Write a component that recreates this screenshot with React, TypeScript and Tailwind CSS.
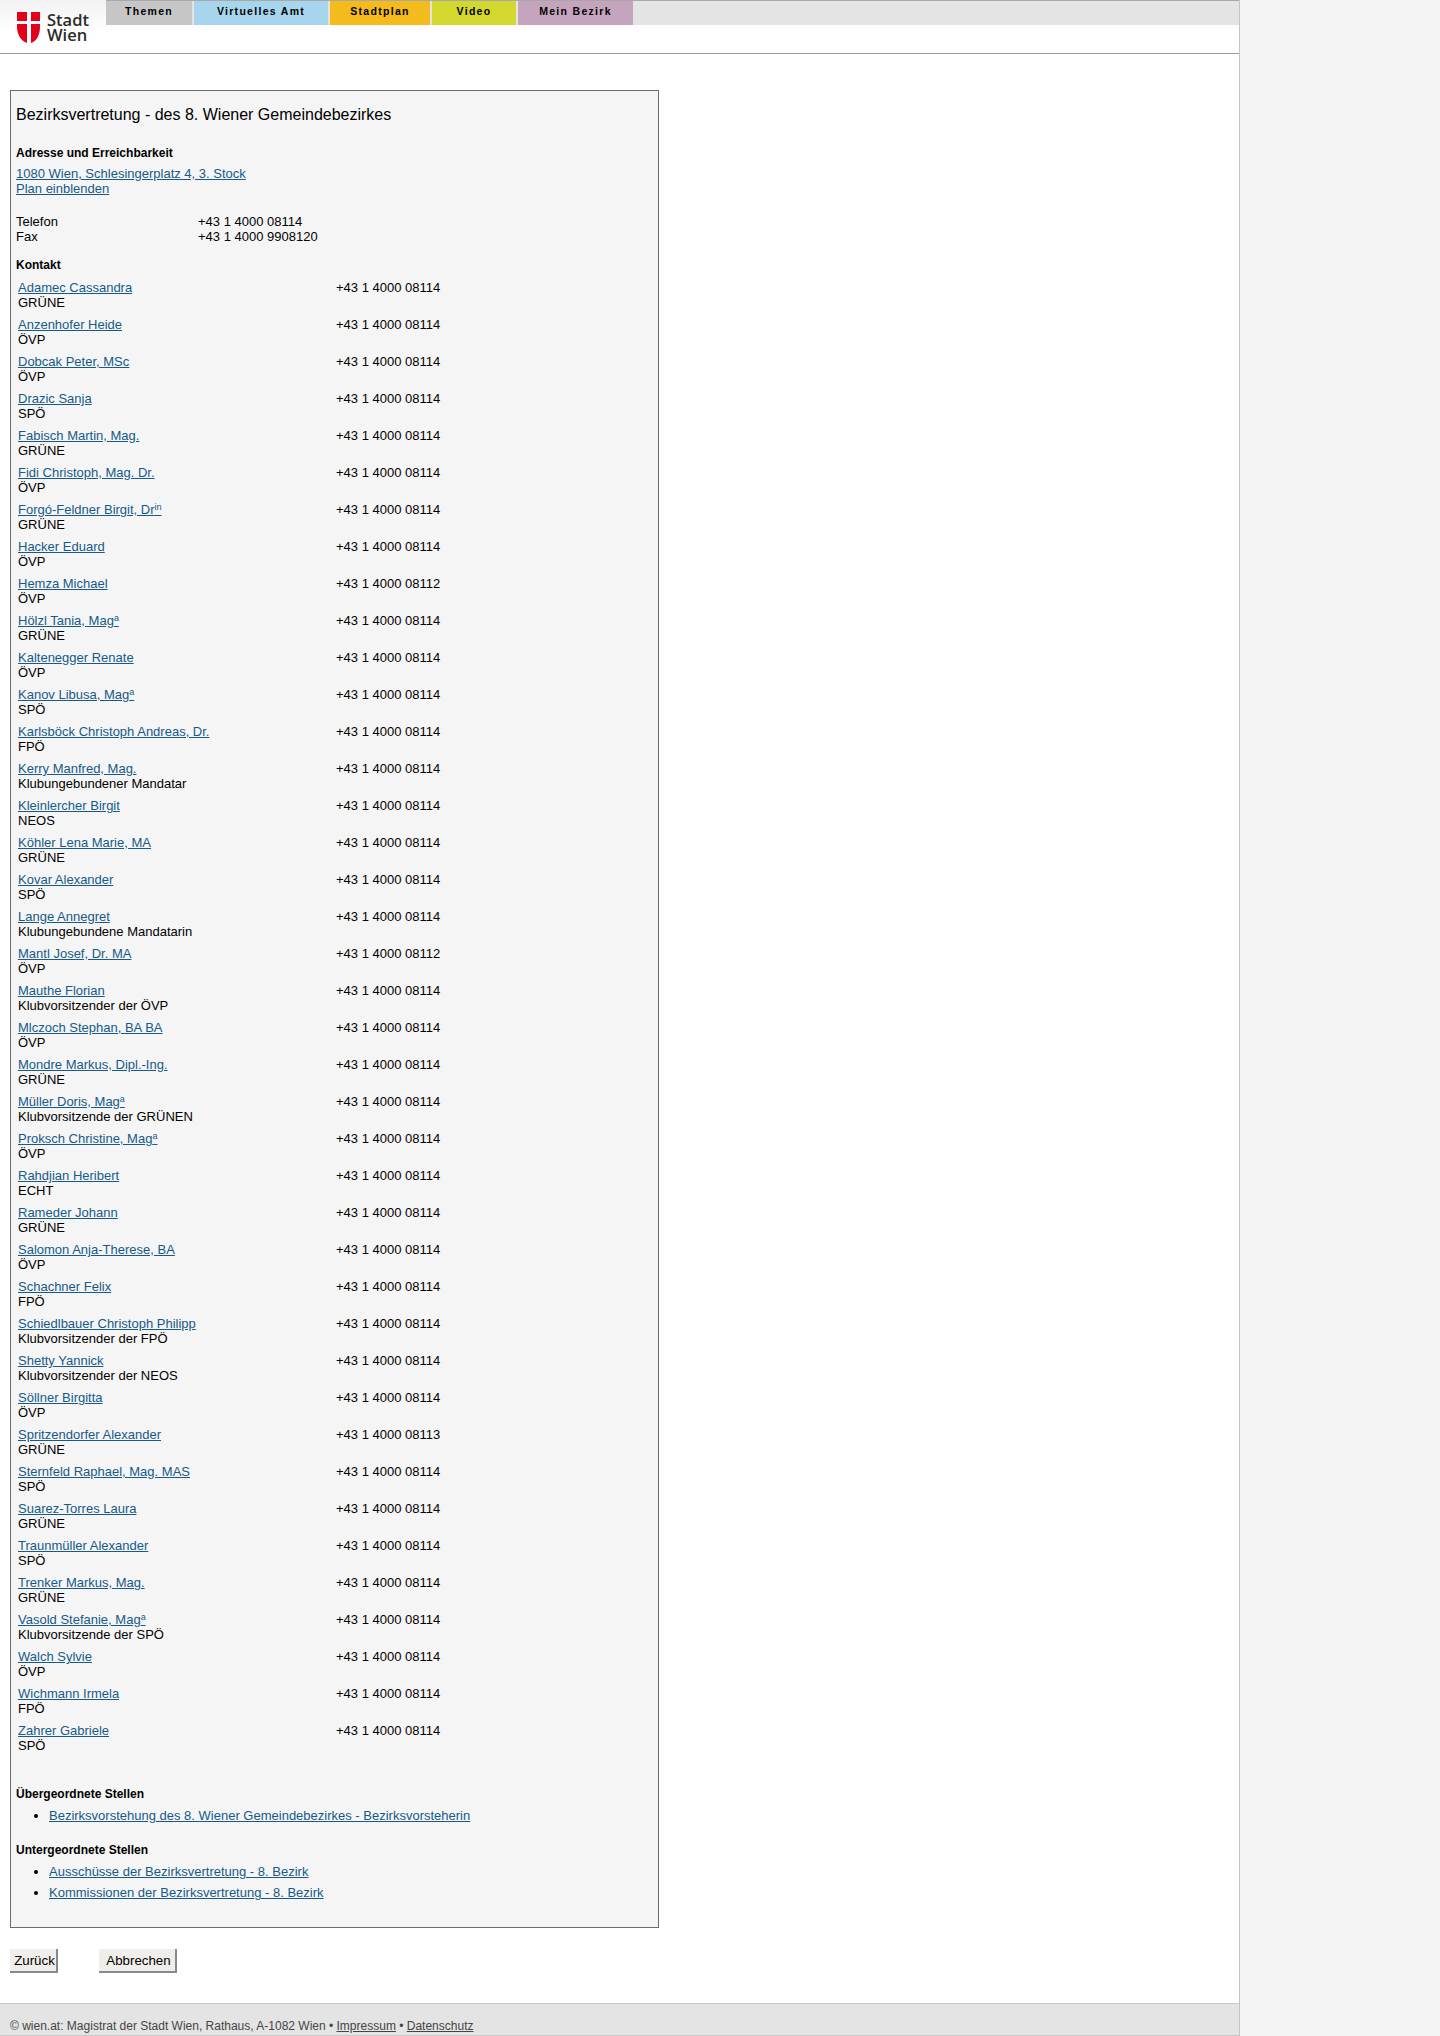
type Person = {
  name: string
  sup?: string
  role: string
  phone?: string
}

const people: Person[] = [
  { name: "Adamec Cassandra", role: "GRÜNE" },
  { name: "Anzenhofer Heide", role: "ÖVP" },
  { name: "Dobcak Peter, MSc", role: "ÖVP" },
  { name: "Drazic Sanja", role: "SPÖ" },
  { name: "Fabisch Martin, Mag.", role: "GRÜNE" },
  { name: "Fidi Christoph, Mag. Dr.", role: "ÖVP" },
  { name: "Forgó-Feldner Birgit, Dr", sup: "in", role: "GRÜNE" },
  { name: "Hacker Eduard", role: "ÖVP" },
  { name: "Hemza Michael", role: "ÖVP", phone: "+43 1 4000 08112" },
  { name: "Hölzl Tania, Mag", sup: "a", role: "GRÜNE" },
  { name: "Kaltenegger Renate", role: "ÖVP" },
  { name: "Kanov Libusa, Mag", sup: "a", role: "SPÖ" },
  { name: "Karlsböck Christoph Andreas, Dr.", role: "FPÖ" },
  { name: "Kerry Manfred, Mag.", role: "Klubungebundener Mandatar" },
  { name: "Kleinlercher Birgit", role: "NEOS" },
  { name: "Köhler Lena Marie, MA", role: "GRÜNE" },
  { name: "Kovar Alexander", role: "SPÖ" },
  { name: "Lange Annegret", role: "Klubungebundene Mandatarin" },
  { name: "Mantl Josef, Dr. MA", role: "ÖVP", phone: "+43 1 4000 08112" },
  { name: "Mauthe Florian", role: "Klubvorsitzender der ÖVP" },
  { name: "Mlczoch Stephan, BA BA", role: "ÖVP" },
  { name: "Mondre Markus, Dipl.-Ing.", role: "GRÜNE" },
  { name: "Müller Doris, Mag", sup: "a", role: "Klubvorsitzende der GRÜNEN" },
  { name: "Proksch Christine, Mag", sup: "a", role: "ÖVP" },
  { name: "Rahdjian Heribert", role: "ECHT" },
  { name: "Rameder Johann", role: "GRÜNE" },
  { name: "Salomon Anja-Therese, BA", role: "ÖVP" },
  { name: "Schachner Felix", role: "FPÖ" },
  { name: "Schiedlbauer Christoph Philipp", role: "Klubvorsitzender der FPÖ" },
  { name: "Shetty Yannick", role: "Klubvorsitzender der NEOS" },
  { name: "Söllner Birgitta", role: "ÖVP" },
  { name: "Spritzendorfer Alexander", role: "GRÜNE", phone: "+43 1 4000 08113" },
  { name: "Sternfeld Raphael, Mag. MAS", role: "SPÖ" },
  { name: "Suarez-Torres Laura", role: "GRÜNE" },
  { name: "Traunmüller Alexander", role: "SPÖ" },
  { name: "Trenker Markus, Mag.", role: "GRÜNE" },
  { name: "Vasold Stefanie, Mag", sup: "a", role: "Klubvorsitzende der SPÖ" },
  { name: "Walch Sylvie", role: "ÖVP" },
  { name: "Wichmann Irmela", role: "FPÖ" },
  { name: "Zahrer Gabriele", role: "SPÖ" },
]

const tabs = [
  { label: "Themen", className: "w-[86px] bg-[#c6c6c6]" },
  { label: "Virtuelles Amt", className: "w-[134px] bg-[#a8d5ee]" },
  { label: "Stadtplan", className: "w-[100px] bg-[#f4bb1c]" },
  { label: "Video", className: "w-[84px] bg-[#d2d82e]" },
  { label: "Mein Bezirk", className: "w-[115px] bg-[#c5a5bd]" },
]

const linkClass = "text-[#165a8a] underline"

function Logo() {
  return (
    <div className="flex w-[106px] pl-[17px] pt-[11px]">
      <svg width="23" height="32" viewBox="0 0 23 32" className="mt-px shrink-0">
        <path d="M0 0h10v9H0zM14 0h9v9H14z" fill="#e2001a" />
        <path d="M0 12h10v19C4 29 0 22 0 15zM14 12h9v3c0 7-3 14-9 16z" fill="#e2001a" />
      </svg>
      <div className="ml-[7px] font-['Open_Sans',sans-serif] text-[16.5px] leading-[15px] font-semibold text-[#2b2b2b]">
        <div className="mt-[1px]">Stadt</div>
        <div>Wien</div>
      </div>
    </div>
  )
}

function SectionTitle({ children, className }: { children: string; className: string }) {
  return <h3 className={`text-[12px] leading-[15px] font-bold ${className}`}>{children}</h3>
}

export default function App() {
  return (
    <div className="min-h-[2036px] bg-[#f4f4f4] font-['Liberation_Sans',Arial,sans-serif] text-[13px] leading-[15px] text-black">
      <div className="flex min-h-[2036px] w-[1240px] flex-col border-r border-[#c4c4c4] bg-white">
        <header className="flex h-[54px] shrink-0 border-b border-[#9a9a9a] bg-gradient-to-b from-[#f2f2f2] to-white to-[60%]">
          <Logo />
          <div className="flex h-[25px] flex-1 gap-[2px] border-t border-[#a8a8a8] bg-[#e4e4e4]">
            {tabs.map((tab) => (
              <div
                key={tab.label}
                className={`${tab.className} pt-[4px] text-center text-[10.5px] leading-[13px] font-bold tracking-[1.3px]`}
              >
                {tab.label}
              </div>
            ))}
          </div>
        </header>

        <main className="flex-1 pt-[36px] pl-[10px]">
          <section className="h-[1838px] w-[649px] border border-[#6b6b6b] bg-[#f5f5f5] pt-[14px] pl-[5px]">
            <h1 className="text-[16px] leading-[20px]">Bezirksvertretung - des 8. Wiener Gemeindebezirkes</h1>

            <SectionTitle className="mt-[21px]">Adresse und Erreichbarkeit</SectionTitle>
            <div className="mt-[5px]">
              <a className={linkClass}>1080 Wien, Schlesingerplatz 4, 3. Stock</a>
              <br />
              <a className={linkClass}>Plan einblenden</a>
            </div>

            <div className="mt-[18px] grid grid-cols-[182px_1fr]">
              <span>Telefon</span>
              <span>+43 1 4000 08114</span>
              <span>Fax</span>
              <span>+43 1 4000 9908120</span>
            </div>

            <SectionTitle className="mt-[14px]">Kontakt</SectionTitle>

            <div className="mt-[7px] pl-[2px]">
              {people.map((person) => (
                <div key={person.name} className="grid h-[37px] grid-cols-[318px_1fr]">
                  <div>
                    <a className={linkClass}>
                      {person.name}
                      {person.sup && <sup className="text-[9px]">{person.sup}</sup>}
                    </a>
                    <br />
                    {person.role}
                  </div>
                  <div>{person.phone ?? "+43 1 4000 08114"}</div>
                </div>
              ))}
            </div>

            <SectionTitle className="mt-[27px]">Übergeordnete Stellen</SectionTitle>
            <ul className="mt-[6px] list-disc pl-[33px]">
              <li className="h-[21px]">
                <a className={linkClass}>Bezirksvorstehung des 8. Wiener Gemeindebezirkes - Bezirksvorsteherin</a>
              </li>
            </ul>

            <SectionTitle className="mt-[14px]">Untergeordnete Stellen</SectionTitle>
            <ul className="mt-[6px] list-disc pl-[33px]">
              <li className="h-[21px]">
                <a className={linkClass}>Ausschüsse der Bezirksvertretung - 8. Bezirk</a>
              </li>
              <li className="h-[21px]">
                <a className={linkClass}>Kommissionen der Bezirksvertretung - 8. Bezirk</a>
              </li>
            </ul>
          </section>

          <div className="mt-[21px] flex gap-[41px]">
            <button className="h-[24px] w-[48px] border-r-2 border-b-2 border-[#8a8a8a] bg-[#f0eeea] pl-[3px] text-[13.3px]">
              Zurück
            </button>
            <button className="h-[24px] w-[78px] border-r-2 border-b-2 border-[#8a8a8a] bg-[#f0eeea] pl-[3px] text-[13.3px]">
              Abbrechen
            </button>
          </div>
        </main>

        <footer className="h-[33px] shrink-0 border-y border-[#c8c8c8] bg-[#e4e4e4] pt-[15px] pl-[10px] text-[12px] leading-[15px] text-[#444]">
          © wien.at: Magistrat der Stadt Wien, Rathaus, A-1082 Wien • <a className="underline">Impressum</a> •{" "}
          <a className="underline">Datenschutz</a>
        </footer>
      </div>
    </div>
  )
}
